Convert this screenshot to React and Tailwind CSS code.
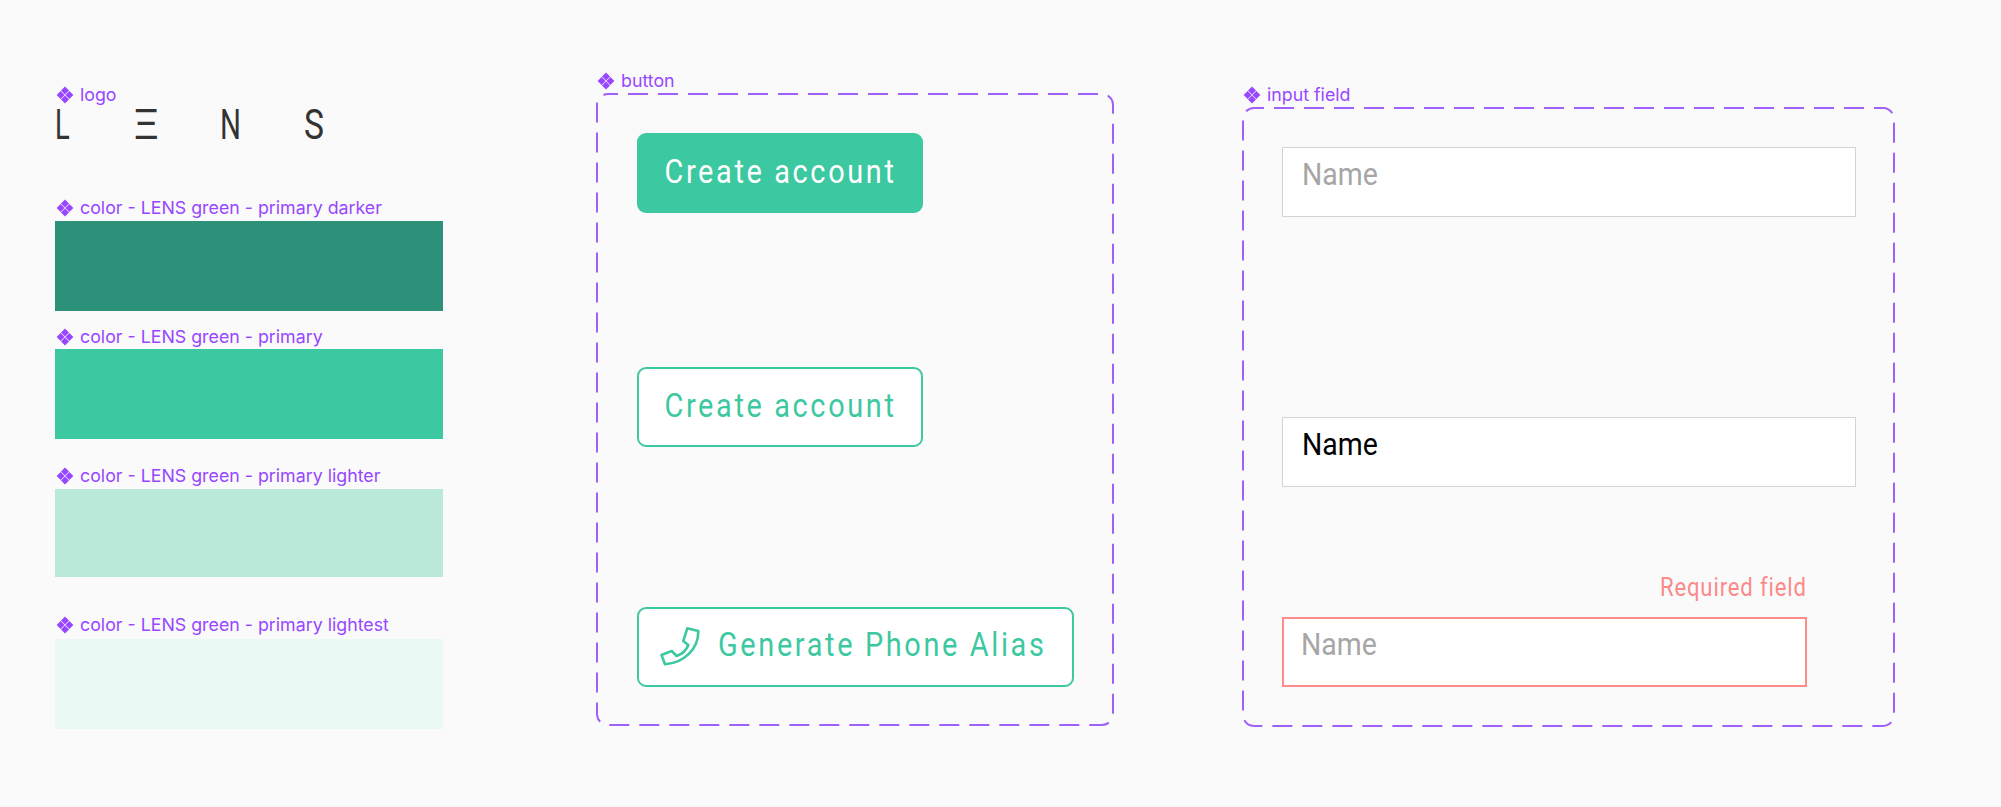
const roboto = "font-['Roboto',sans-serif]"

function Diamonds() {
  return (
    <svg className="w-[18px] h-[18px] shrink-0" viewBox="0 0 18 18" fill="#9747ff">
      <path d="M9 0.6L13 4.6L9 8.6L5 4.6Z" />
      <path d="M9 9.4L13 13.4L9 17.4L5 13.4Z" />
      <path d="M4.6 5L8.6 9L4.6 13L0.6 9Z" />
      <path d="M13.4 5L17.4 9L13.4 13L9.4 9Z" />
    </svg>
  )
}

function Label({ children, className = '' }) {
  return (
    <div className={`flex items-center gap-[6px] h-5 pl-px text-[17.8px] leading-5 text-[#9747ff] font-['Inter',sans-serif] whitespace-nowrap ${className}`}>
      <Diamonds />
      <span>{children}</span>
    </div>
  )
}

function Swatch({ label, color, height, gap }) {
  return (
    <div>
      <Label className={gap}>{label}</Label>
      <div className={`w-[388px] ${height} ${color}`} />
    </div>
  )
}

// figma's dashes are far longer than what border-dashed draws
function DashedFrame({ width, height }) {
  return (
    <svg className="absolute left-0 top-0 pointer-events-none" width={width} height={height} fill="none">
      <rect x="1" y="1" width={width - 2} height={height - 2} rx="11" stroke="#9f60fb" strokeWidth="2" strokeDasharray="20 10" strokeDashoffset="10" />
    </svg>
  )
}

function PhoneIcon() {
  return (
    <svg className="w-10 h-10 shrink-0" viewBox="0 0 40 40" fill="none" stroke="#3cc8a0" strokeWidth="2.6" strokeLinejoin="round">
      <path d="M27.3 1.3L38.3 4C38.5 22 24 36 5 37.3L1.5 28L11.7 24L16.7 29C22 27 26.5 23 28.3 18L23.3 14Z" />
    </svg>
  )
}

function Logo() {
  return (
    <div className={`flex h-[93px] text-[42px] leading-10 text-[#333] ${roboto}`}>
      <span className="w-[78px]"><span className="inline-block origin-left scale-x-[0.65]">L</span></span>
      <span className="w-[87px]"><span className="inline-block origin-left scale-x-[1.1]">Ξ</span></span>
      <span className="w-[84px]"><span className="inline-block origin-left scale-x-[0.7]">N</span></span>
      <span><span className="inline-block origin-left scale-x-[0.8]">S</span></span>
    </div>
  )
}

function ButtonText({ children }) {
  return <span className="inline-block scale-x-[0.85] tracking-[3.1px] pb-1 whitespace-nowrap">{children}</span>
}

function Field({ children, className }) {
  return (
    <div className={`h-[70px] bg-white text-[32px] leading-10 ${className}`}>
      <span className="inline-block origin-left scale-x-[0.89]">{children}</span>
    </div>
  )
}

export default function App() {
  return (
    <div className="min-h-screen bg-[#fafafa] flex items-start pl-[55px] pt-[71px] overflow-hidden">
      <div className="w-[388px] mt-[14px] shrink-0">
        <Label>logo</Label>
        <Logo />
        <Swatch label="color - LENS green - primary darker" color="bg-[#2c9178]" height="h-[90px]" gap="mb-[3px]" />
        <div className="mt-4">
          <Swatch label="color - LENS green - primary" color="bg-[#3cc8a0]" height="h-[90px]" gap="mb-[2px]" />
        </div>
        <div className="mt-[27px]">
          <Swatch label="color - LENS green - primary lighter" color="bg-[#bae8d9]" height="h-[88px]" gap="mb-[3px]" />
        </div>
        <div className="mt-[38px]">
          <Swatch label="color - LENS green - primary lightest" color="bg-[#eaf9f3]" height="h-[90px]" gap="mb-1" />
        </div>
      </div>

      <div className="w-[518px] ml-[153px] shrink-0">
        <Label className="mb-[2px]">button</Label>
        <div className={`relative h-[633px] pl-[41px] pt-10 ${roboto}`}>
          <DashedFrame width={518} height={633} />
          <button className="flex items-center justify-center w-[286px] h-20 rounded-[9px] bg-[#3cc8a0] text-white text-[34px]">
            <ButtonText>Create account</ButtonText>
          </button>
          <button className="flex items-center justify-center w-[286px] h-20 mt-[154px] rounded-[9px] border-2 border-[#3cc8a0] bg-white text-[#3cc8a0] text-[34px]">
            <ButtonText>Create account</ButtonText>
          </button>
          <button className="flex items-center w-[437px] h-20 mt-40 pl-[21px] rounded-[9px] border-2 border-[#3cc8a0] bg-white text-[#3cc8a0] text-[34px] whitespace-nowrap">
            <PhoneIcon />
            <span className="inline-block origin-left scale-x-[0.85] ml-[18px] tracking-[3.1px] pb-[5px]">Generate Phone Alias</span>
          </button>
        </div>
      </div>

      <div className="w-[653px] ml-[128px] mt-[14px] shrink-0">
        <Label className="mb-[2px]">input field</Label>
        <div className={`relative h-[620px] pl-10 pt-10 ${roboto}`}>
          <DashedFrame width={653} height={620} />
          <Field className="w-[574px] pt-[6px] pl-[19px] border border-[#d4d4d4] text-[#a6a6a6]">Name</Field>
          <Field className="w-[574px] mt-[200px] pt-[6px] pl-[19px] border border-[#d4d4d4] text-black">Name</Field>
          <div className="w-[525px] mt-[84px] text-right text-[26px] leading-8 text-[#fb8a8a]">
            <span className="inline-block origin-right scale-x-[0.85] tracking-[1px]">Required field</span>
          </div>
          <Field className="w-[525px] mt-[14px] pt-[5px] pl-[17px] border-2 border-[#ff8a8a] text-[#a6a6a6]">Name</Field>
        </div>
      </div>
    </div>
  )
}
